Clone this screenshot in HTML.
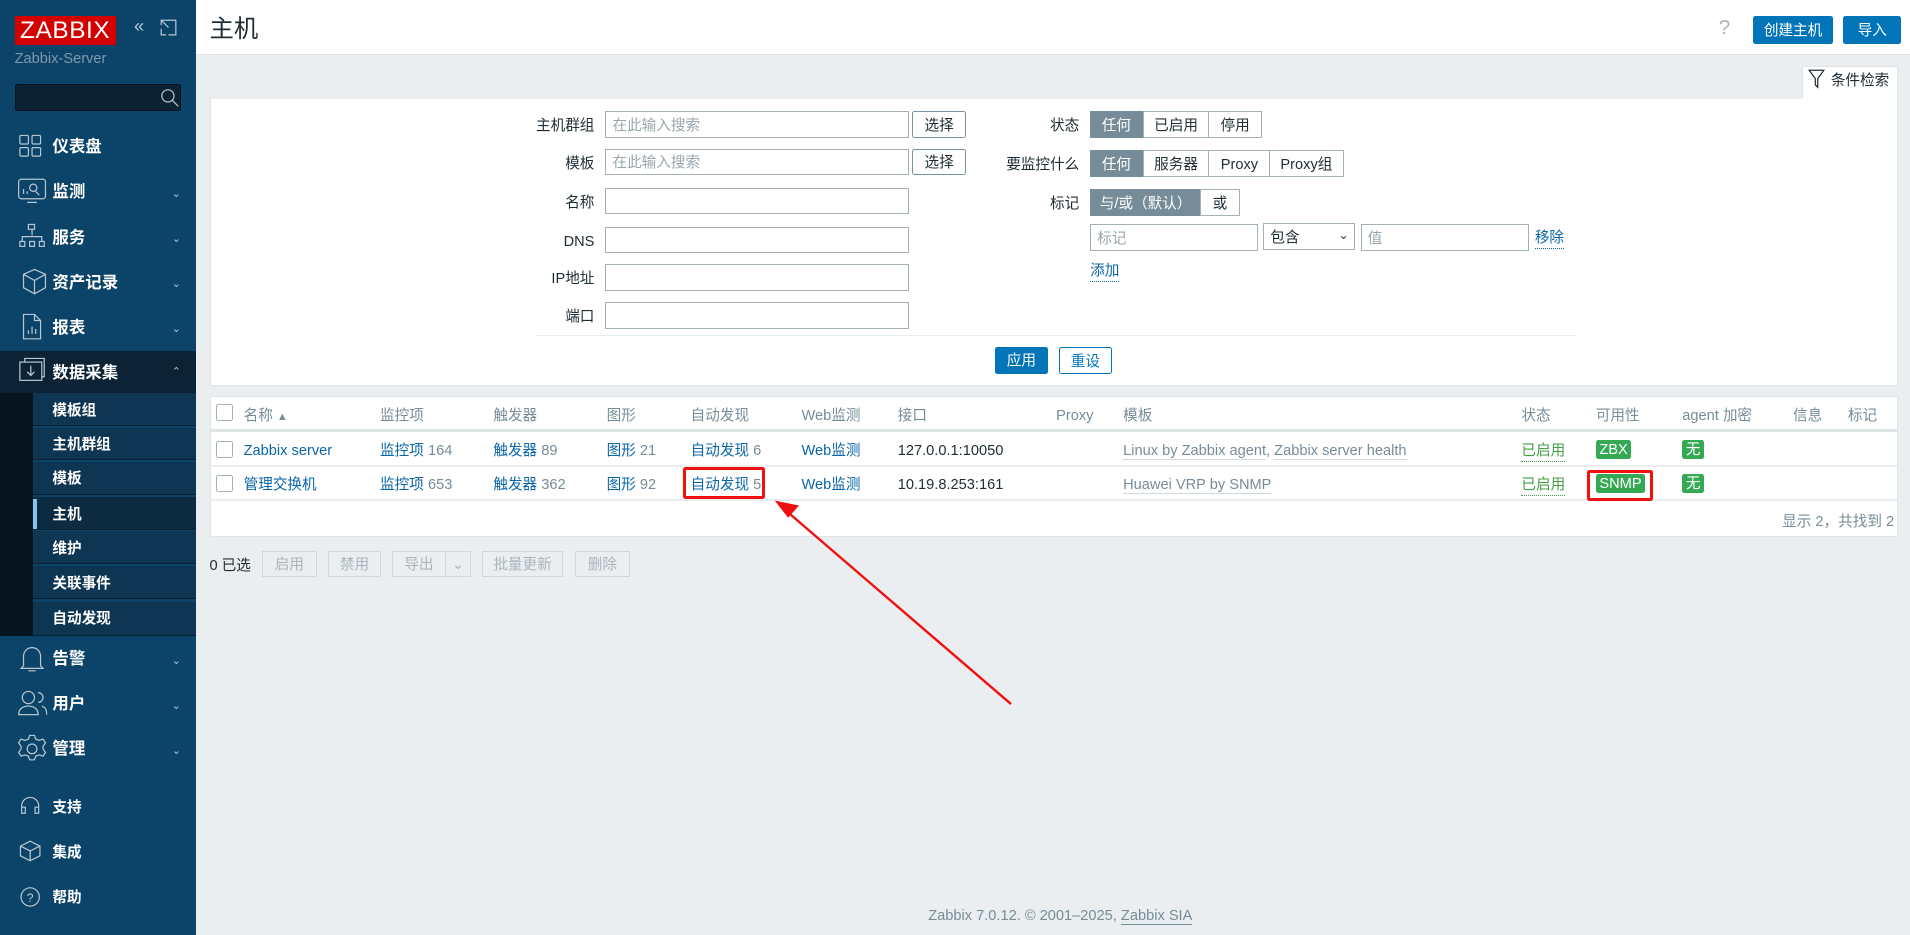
<!DOCTYPE html>
<html><head><meta charset="utf-8"><style>
*{box-sizing:border-box;margin:0;padding:0}
html,body{width:1910px;height:935px;overflow:hidden;background:#ebeef0}
#w{zoom:1.21811;width:1568px;height:768px;position:relative;font-family:"Liberation Sans","Noto Sans CJK SC",sans-serif;font-size:12px;line-height:15.5px;color:#1f2c33}
.a{position:absolute;white-space:nowrap}
#sb{position:absolute;left:0;top:0;width:161px;height:768px;background:#0b4468}
.mi{position:absolute;left:43px;color:#fff;font-size:13.5px;line-height:19px;font-weight:bold}
.chev{position:absolute;left:141px;color:#b7c6d1;font-size:9px}
.sub{position:absolute;left:27px;width:134px;height:27px;background:#0e3552;border-bottom:1px solid #07202f;color:#fff;font-size:12px;font-weight:bold;padding:7px 0 0 16px}
.ic{position:absolute;left:12px}
.lbl{position:absolute;text-align:right;width:120px;color:#1f2c33}
.inp{position:absolute;height:22px;border:1px solid #a3b0b8;background:#fff;color:#9aa6ad;padding:4px 5px 0}
.btn{position:absolute;height:22px;border:1px solid #7a929f;background:#fff;text-align:center;padding-top:4px;border-radius:2px}
.seg{position:absolute;height:22px;border:1px solid #a3b0b8;background:#fff;text-align:center;padding-top:4px}
.seg.on{background:#768d99;color:#fff;border-color:#768d99}
.lk{color:#0a66a8}
.g{color:#768d99}
.th{position:absolute;top:334px;color:#768d99}
.cb{position:absolute;left:177px;width:14px;height:14px;border:1px solid #a3b0b8;border-radius:2px;background:#fff}
.dis{position:absolute;top:452px;height:22px;border:1px solid #cfd8dc;background:#ebeef0;color:#aab5bb;text-align:center;padding-top:4px}
.tag{position:absolute;background:#34a853;color:#fff;padding:1px 3px 0;height:16px;font-size:12px;border-radius:2px}
</style></head><body><div id="w">
<div id="sb">
 <div class="a" style="left:12px;top:13px;width:83px;height:24px;background:#d40000;color:#fff;font-size:20px;text-align:center;line-height:24px;letter-spacing:.5px">ZABBIX</div>
 <div class="a" style="left:110px;top:14px;color:#b7c6d1;font-size:15px">«</div>
 <svg class="a" style="left:131px;top:16px" width="14" height="14"><path d="M1 5V1h12v12H7M1 1l6 6M1 8v5h4" stroke="#b7c6d1" fill="none"/></svg>
 <div class="a" style="left:12px;top:41px;color:#7f97a8;font-size:12px">Zabbix-Server</div>
 <div class="a" style="left:12px;top:69px;width:137px;height:22px;background:#0c2233;border:1px solid #051520;border-radius:2px"></div>
 <svg class="a" style="left:131px;top:72px" width="16" height="16"><circle cx="6.5" cy="6.5" r="5" stroke="#b7c6d1" fill="none"/><path d="M10 10l5 5" stroke="#b7c6d1"/></svg>
 <svg class="ic" style="top:109px" width="24" height="22"><g stroke="#b7c6d1" fill="none"><rect x="4" y="2" width="7" height="7" rx="1"/><rect x="14" y="2" width="7" height="7" rx="1"/><rect x="4" y="12" width="7" height="7" rx="1"/><rect x="14" y="12" width="7" height="7" rx="1"/></g></svg>
 <div class="mi" style="top:112px">仪表盘</div>
 <svg class="ic" style="top:146px" width="28" height="22"><g stroke="#b7c6d1" fill="none"><rect x="3" y="1" width="22" height="16" rx="2"/><path d="M10 20h8M7 13V9M10 13v-2M17 11l3 3"/><circle cx="15" cy="8" r="3"/></g></svg>
 <div class="mi" style="top:149px">监测</div><div class="chev" style="top:152px">⌄</div>
 <svg class="ic" style="top:182px" width="28" height="24"><g stroke="#b7c6d1" fill="none"><rect x="11" y="2" width="5" height="4"/><rect x="4" y="16" width="4" height="4"/><rect x="12" y="16" width="4" height="4"/><rect x="20" y="16" width="4" height="4"/><path d="M14 6v5M6 16v-4h16v4"/></g></svg>
 <div class="mi" style="top:186px">服务</div><div class="chev" style="top:189px">⌄</div>
 <svg class="ic" style="top:219px" width="28" height="24"><g stroke="#b7c6d1" fill="none"><path d="M16 2l9 4v11l-9 5-9-5V6zM7 6l9 5 9-5M16 11v11"/></g></svg>
 <div class="mi" style="top:223px">资产记录</div><div class="chev" style="top:226px">⌄</div>
 <svg class="ic" style="top:256px" width="28" height="24"><g stroke="#b7c6d1" fill="none"><path d="M7 2h9l5 5v15H7zM16 2v5h5M11 18v-3M14 18v-6M17 18v-4"/></g></svg>
 <div class="mi" style="top:260px">报表</div><div class="chev" style="top:263px">⌄</div>
 <div class="a" style="left:0;top:288px;width:161px;height:35px;background:#0b2335"></div>
 <svg class="ic" style="top:292px" width="28" height="24"><g stroke="#b7c6d1" fill="none"><rect x="4" y="5" width="18" height="15"/><path d="M8 5V2h16v15h-2M13 8v8M10 13l3 3 3-3"/></g></svg>
 <div class="mi" style="top:297px">数据采集</div><div class="chev" style="top:298px">⌃</div>
 <div class="a" style="left:0;top:323px;width:27px;height:199px;background:#07151f"></div>
 <div class="sub" style="top:323px">模板组</div>
 <div class="sub" style="top:351px">主机群组</div>
 <div class="sub" style="top:379px">模板</div>
 <div class="sub" style="top:408px;background:#0c2a40">主机</div>
 <div class="a" style="left:27px;top:410px;width:3px;height:24px;background:#7fc4f2"></div>
 <div class="sub" style="top:436px">维护</div>
 <div class="sub" style="top:465px">关联事件</div>
 <div class="sub" style="top:494px;height:28px">自动发现</div>
 <svg class="ic" style="top:529px" width="28" height="24"><g stroke="#b7c6d1" fill="none"><path d="M7 18V10a7 7 0 0114 0v8l2 2H5zM11 22h6"/></g></svg>
 <div class="mi" style="top:532px">告警</div><div class="chev" style="top:535px">⌄</div>
 <svg class="ic" style="top:566px" width="30" height="24"><g stroke="#b7c6d1" fill="none"><circle cx="11" cy="7" r="5"/><path d="M3 21c0-5 4-7 8-7s8 2 8 7zM19 3a4 4 0 010 8M22 14c3 1 4 3 4 7"/></g></svg>
 <div class="mi" style="top:569px">用户</div><div class="chev" style="top:572px">⌄</div>
 <svg class="ic" style="top:602px" width="28" height="26"><g stroke="#b7c6d1" fill="none"><circle cx="14" cy="13" r="4"/><path d="M12 2h4l1 3 3 1 3-1 2 3-2 3v2l2 3-2 3-3-1-3 1-1 3h-4l-1-3-3-1-3 1-2-3 2-3v-2l-2-3 2-3 3 1 3-1z"/></g></svg>
 <div class="mi" style="top:606px">管理</div><div class="chev" style="top:609px">⌄</div>
 <svg class="ic" style="top:653px;left:15px" width="20" height="18"><path d="M3 12V9a7 7 0 0114 0v3M3 10h3v5H3zM14 10h3v5h-3z" stroke="#b7c6d1" fill="none"/></svg>
 <div class="mi" style="top:654px;font-size:12px">支持</div>
 <svg class="ic" style="top:690px;left:15px" width="20" height="18"><path d="M10 1l8 4v8l-8 4-8-4V5zM2 5l8 4 8-4M10 9v8" stroke="#b7c6d1" fill="none"/></svg>
 <div class="mi" style="top:691px;font-size:12px">集成</div>
 <svg class="ic" style="top:727px;left:15px" width="20" height="18"><circle cx="10" cy="9" r="7.5" stroke="#b7c6d1" fill="none"/><text x="10" y="13" font-size="10" fill="#b7c6d1" text-anchor="middle" font-family="Liberation Sans">?</text></svg>
 <div class="mi" style="top:728px;font-size:12px">帮助</div>
</div>
<div class="a" style="left:161px;top:0;width:1407px;height:45px;background:#fff;border-bottom:1px solid #dfe4e7"></div>
<div class="a" style="left:172px;top:12px;font-size:20px;line-height:24px;color:#1f2c33">主机</div>
<div class="a" style="left:1411px;top:14px;font-size:17px;line-height:18px;color:#aab5bb">?</div>
<div class="a" style="left:1439px;top:13px;width:66px;height:23px;background:#0275b8;color:#fff;text-align:center;padding-top:5px;border-radius:2px">创建主机</div>
<div class="a" style="left:1513px;top:13px;width:48px;height:23px;background:#0275b8;color:#fff;text-align:center;padding-top:5px;border-radius:2px">导入</div>
<div class="a" style="left:1479px;top:54px;width:79px;height:28px;background:#fff;border:1px solid #dfe4e7;border-bottom:none"></div>
<svg class="a" style="left:1484px;top:57px" width="14" height="16"><path d="M1 1h12L8 8v7L6 13V8z" stroke="#1f2c33" fill="none"/></svg>
<div class="a" style="left:1503px;top:59px;font-size:12px">条件检索</div>
<div class="a" style="left:172px;top:81px;width:1386px;height:236px;background:#fff;border:1px solid #dfe4e7;border-top:none"></div>
<div class="lbl" style="left:368px;top:96px">主机群组</div><div class="inp" style="left:497px;top:91px;width:249px">在此输入搜索</div><div class="btn" style="left:749px;top:91px;width:44px">选择</div>
<div class="lbl" style="left:368px;top:127px">模板</div><div class="inp" style="left:497px;top:122px;width:249px">在此输入搜索</div><div class="btn" style="left:749px;top:122px;width:44px">选择</div>
<div class="lbl" style="left:368px;top:159px">名称</div><div class="inp" style="left:497px;top:154px;width:249px"></div>
<div class="lbl" style="left:368px;top:191px">DNS</div><div class="inp" style="left:497px;top:186px;width:249px"></div>
<div class="lbl" style="left:368px;top:222px">IP地址</div><div class="inp" style="left:497px;top:217px;width:249px"></div>
<div class="lbl" style="left:368px;top:253px">端口</div><div class="inp" style="left:497px;top:248px;width:249px"></div>
<div class="lbl" style="left:766px;top:96px">状态</div>
<div class="seg on" style="left:895px;top:91px;width:43px">任何</div><div class="seg" style="left:938px;top:91px;width:55px">已启用</div><div class="seg" style="left:992px;top:91px;width:44px">停用</div>
<div class="lbl" style="left:766px;top:128px">要监控什么</div>
<div class="seg on" style="left:895px;top:123px;width:43px">任何</div><div class="seg" style="left:938px;top:123px;width:55px">服务器</div><div class="seg" style="left:992px;top:123px;width:51px">Proxy</div><div class="seg" style="left:1042px;top:123px;width:61px">Proxy组</div>
<div class="lbl" style="left:766px;top:160px">标记</div>
<div class="seg on" style="left:895px;top:155px;width:91px">与/或（默认）</div><div class="seg" style="left:985px;top:155px;width:33px">或</div>
<div class="inp" style="left:895px;top:184px;width:138px">标记</div>
<div class="inp" style="left:1037px;top:183px;width:75px;color:#1f2c33">包含<span style="position:absolute;right:4px;top:2px;font-size:10px">⌄</span></div>
<div class="inp" style="left:1117px;top:184px;width:138px">值</div>
<div class="a lk" style="left:1260px;top:188px;border-bottom:1px dotted #0a66a8">移除</div>
<div class="a lk" style="left:895px;top:215px;border-bottom:1px dotted #0a66a8">添加</div>
<div class="a" style="left:440px;top:275px;width:855px;height:1px;background:#ebeef0"></div>
<div class="a" style="left:817px;top:285px;width:43px;height:22px;background:#0275b8;color:#fff;text-align:center;padding-top:4px;border-radius:2px">应用</div>
<div class="btn" style="left:869px;top:285px;width:44px;border-color:#0275b8;color:#0275b8">重设</div>
<div class="a" style="left:172px;top:325px;width:1386px;height:116px;background:#fff;border:1px solid #dfe4e7"></div>
<div class="a" style="left:173px;top:352px;width:1384px;height:3px;background:#dfe4e7"></div>
<div class="a" style="left:173px;top:382px;width:1384px;height:1px;background:#ebeef0"></div>
<div class="a" style="left:173px;top:410px;width:1384px;height:1px;background:#ebeef0"></div>
<div class="cb" style="top:332px"></div><div class="cb" style="top:362px"></div><div class="cb" style="top:390px"></div>
<div class="th lk" style="left:200px">名称 <span style="font-size:9px">▲</span></div><div class="th" style="left:312px">监控项</div><div class="th" style="left:405px">触发器</div><div class="th" style="left:498px">图形</div><div class="th" style="left:567px">自动发现</div><div class="th" style="left:658px">Web监测</div><div class="th" style="left:737px">接口</div><div class="th" style="left:867px">Proxy</div><div class="th" style="left:922px">模板</div><div class="th lk" style="left:1249px">状态</div><div class="th" style="left:1310px">可用性</div><div class="th" style="left:1381px">agent 加密</div><div class="th" style="left:1472px">信息</div><div class="th" style="left:1517px">标记</div>
<div class="a lk" style="left:200px;top:363px">Zabbix server</div>
<div class="a" style="left:312px;top:363px"><span class="lk">监控项</span> <span class="g">164</span></div>
<div class="a" style="left:405px;top:363px"><span class="lk">触发器</span> <span class="g">89</span></div>
<div class="a" style="left:498px;top:363px"><span class="lk">图形</span> <span class="g">21</span></div>
<div class="a" style="left:567px;top:363px"><span class="lk">自动发现</span> <span class="g">6</span></div>
<div class="a lk" style="left:658px;top:363px">Web监测</div>
<div class="a" style="left:737px;top:363px">127.0.0.1:10050</div>
<div class="a g" style="left:922px;top:363px"><span style="border-bottom:1px solid #cfd8dc">Linux by Zabbix agent</span>, <span style="border-bottom:1px solid #cfd8dc">Zabbix server health</span></div>
<div class="a" style="left:1249px;top:363px;color:#429e47;border-bottom:1px dotted #429e47">已启用</div>
<div class="tag" style="left:1310px;top:361px">ZBX</div><div class="tag" style="left:1381px;top:361px">无</div>
<div class="a lk" style="left:200px;top:391px">管理交换机</div>
<div class="a" style="left:312px;top:391px"><span class="lk">监控项</span> <span class="g">653</span></div>
<div class="a" style="left:405px;top:391px"><span class="lk">触发器</span> <span class="g">362</span></div>
<div class="a" style="left:498px;top:391px"><span class="lk">图形</span> <span class="g">92</span></div>
<div class="a" style="left:567px;top:391px"><span class="lk">自动发现</span> <span class="g">5</span></div>
<div class="a lk" style="left:658px;top:391px">Web监测</div>
<div class="a" style="left:737px;top:391px">10.19.8.253:161</div>
<div class="a g" style="left:922px;top:391px"><span style="border-bottom:1px solid #cfd8dc">Huawei VRP by SNMP</span></div>
<div class="a" style="left:1249px;top:391px;color:#429e47;border-bottom:1px dotted #429e47">已启用</div>
<div class="tag" style="left:1310px;top:389px">SNMP</div><div class="tag" style="left:1381px;top:389px">无</div>
<div class="a g" style="left:1463px;top:421px">显示 2，共找到 2</div>
<div class="a" style="left:561px;top:383px;width:67px;height:27px;border:2.5px solid #f01010;border-radius:2px"></div>
<div class="a" style="left:1303px;top:386px;width:54px;height:25px;border:2.5px solid #f01010;border-radius:2px"></div>
<svg class="a" style="left:0;top:0" width="1568" height="768"><path d="M830 578L645 419" stroke="#f01010" stroke-width="2"/><path d="M636 411l20 4-9 10z" fill="#f01010"/></svg>
<div class="a g" style="left:172px;top:457px;color:#1f2c33">0 已选</div>
<div class="dis" style="left:215px;width:45px">启用</div><div class="dis" style="left:269px;width:44px">禁用</div><div class="dis" style="left:322px;width:44px">导出</div><div class="dis" style="left:365px;width:22px">⌄</div><div class="dis" style="left:396px;width:66px">批量更新</div><div class="dis" style="left:472px;width:45px">删除</div>
<div class="a g" style="left:762px;top:745px">Zabbix 7.0.12. © 2001–2025, <span style="border-bottom:1px solid #768d99">Zabbix SIA</span></div>
</div></body></html>
